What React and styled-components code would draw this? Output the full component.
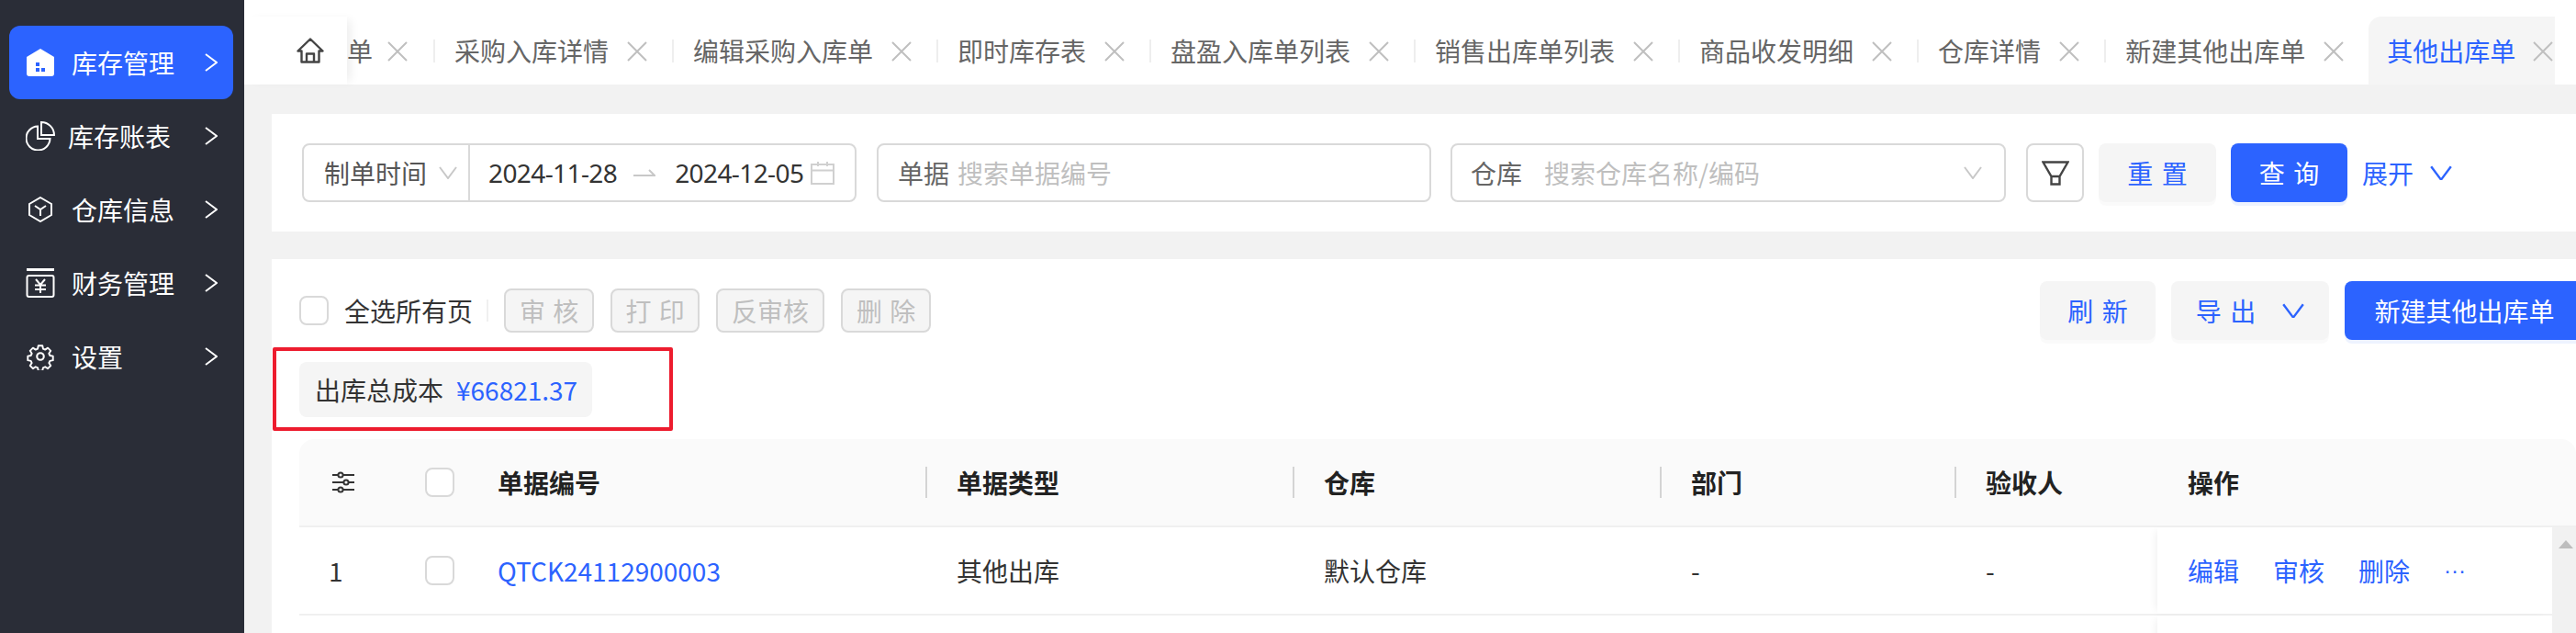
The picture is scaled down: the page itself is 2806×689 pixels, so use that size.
import React from 'react';
import styled, { createGlobalStyle } from 'styled-components';

const BLUE = '#2c63ff';
const GRID = '137px 79px 500px 400px 400px 321px 187px 1fr';

const GlobalStyle = createGlobalStyle`
  html, body { margin: 0; padding: 0; background: #fff; }
  body { font-family: "Noto Sans CJK SC", "Noto Sans", sans-serif; font-size: 28px; color: #333; }
  * { box-sizing: border-box; }
`;

const Page = styled.div`
  display: flex;
  width: 2806px;
  height: 689px;
  overflow: hidden;
`;

/* sidebar */
const Sidebar = styled.aside`
  flex: none;
  width: 266px;
  padding: 28px 12px 0 10px;
  background: #2a2d37;
`;

const MenuItem = styled.div`
  display: flex;
  align-items: center;
  height: 80px;
  padding-right: 17px;
  border-radius: 12px;
  color: #fff;
  background: ${(p) => (p.$active ? BLUE : 'transparent')};
`;

const MenuIcon = styled.span`
  flex: none;
  display: flex;
  justify-content: center;
  width: 68px;
  margin-right: ${(p) => p.$gap}px;
`;

const MenuLabel = styled.span`
  flex: 1;
  line-height: 1;
`;

/* main column */
const Main = styled.main`
  flex: 1;
  min-width: 0;
  background: #f2f2f2;
`;

const TabBar = styled.div`
  display: flex;
  align-items: flex-end;
  height: 92px;
  margin-bottom: 32px;
  padding-right: 23px;
  background: #fff;
`;

const HomeCell = styled.div`
  flex: none;
  display: flex;
  align-items: center;
  height: 74px;
  width: 112px;
  padding: 0 0 0 57px;
  box-shadow: 8px 0 10px -4px rgba(0, 0, 0, 0.07);
  position: relative;
  z-index: 1;
  background: #fff;
`;

const TabScroller = styled.div`
  flex: 1;
  min-width: 0;
  display: flex;
  align-items: center;
  height: 74px;
  overflow: hidden;
`;

const Tab = styled.div`
  flex: none;
  display: flex;
  align-items: center;
  height: 74px;
  padding: 0 ${(p) => (p.$first ? 28 : 27)}px 0 ${(p) => (p.$first ? 0 : p.$active ? 20 : 21)}px;
  gap: ${(p) => (p.$first ? 16 : p.$active ? 19 : 20)}px;
  white-space: nowrap;
  line-height: 1;
  color: ${(p) => (p.$active ? BLUE : '#666')};
  background: ${(p) => (p.$active ? '#f5f5f5' : 'transparent')};
  border-radius: ${(p) => (p.$active ? '14px 0 0 0' : '0')};
  svg { flex: none; margin-top: 2px; }
`;

const TabDivider = styled.span`
  flex: none;
  width: 2px;
  height: 25px;
  background: #eee;
`;

const Card = styled.section`
  position: relative;
  margin-left: 30px;
  background: #fff;
`;

const FilterCard = styled(Card)`
  height: 128px;
  margin-bottom: 30px;
  padding: 32px 0 0 33px;
`;

const FilterRow = styled.div`
  display: flex;
  align-items: center;
`;

const Field = styled.div`
  flex: none;
  display: flex;
  align-items: center;
  width: ${(p) => p.$w}px;
  height: 64px;
  margin-right: ${(p) => p.$mr}px;
  padding-left: ${(p) => p.$pl || 0}px;
  border: 2px solid #d9d9d9;
  border-radius: 8px;
  line-height: 1;
`;

const DateSelect = styled.div`
  flex: none;
  display: flex;
  align-items: center;
  justify-content: space-between;
  width: 181px;
  height: 100%;
  padding: 0 12px 0 22px;
  border-right: 2px solid #d9d9d9;
  color: #555;
`;

const DateValue = styled.span`
  margin: 0 ${(p) => p.$mr}px 0 ${(p) => p.$ml}px;
  color: #333;
  font-family: "Noto Sans", sans-serif;
  font-size: 28px;
  letter-spacing: -0.6px;
  white-space: nowrap;
`;

const FieldLabel = styled.span`
  flex: none;
  color: #666;
  margin-right: ${(p) => p.$mr}px;
`;

const Placeholder = styled.span`
  flex: 1;
  color: #bfbfbf;
`;

const FieldCaret = styled.span`
  display: flex;
  margin-right: 24px;
`;

const IconButton = styled.button`
  flex: none;
  display: flex;
  align-items: center;
  justify-content: center;
  width: 63px;
  height: 64px;
  margin-right: 16px;
  padding: 0;
  background: #fff;
  border: 2px solid #d9d9d9;
  border-radius: 8px;
`;

const Button = styled.button`
  flex: none;
  display: inline-flex;
  align-items: center;
  justify-content: center;
  gap: ${(p) => p.$gap || 0}px;
  width: ${(p) => p.$w}px;
  height: 64px;
  margin-right: ${(p) => p.$mr || 0}px;
  padding: 0;
  border: 0;
  border-radius: 8px;
  font: inherit;
  line-height: 1;
  color: ${(p) => (p.$primary ? '#fff' : BLUE)};
  background: ${(p) => (p.$primary ? BLUE : '#f5f5f5')};
  box-shadow: 0 4px 0 ${(p) => (p.$primary ? 'rgba(44, 99, 255, 0.08)' : 'rgba(0, 0, 0, 0.02)')};
  word-spacing: 3px;
  white-space: nowrap;
`;

const TextLink = styled.span`
  display: inline-flex;
  align-items: center;
  gap: 18px;
  color: ${BLUE};
  line-height: 1;
`;

const TableCard = styled(Card)`
  height: 407px;
  padding: 24px 0 0 30px;
`;

const Toolbar = styled.div`
  display: flex;
  justify-content: space-between;
  align-items: center;
  height: 64px;
`;

const ToolLeft = styled.div`
  display: flex;
  align-items: center;
  line-height: 1;
`;

const ToolRight = styled.div`
  display: flex;
  gap: 17px;
  margin-right: -9px;
`;

const Check = styled.span`
  flex: none;
  display: block;
  width: 32px;
  height: 32px;
  background: #fff;
  border: 2px solid #d9d9d9;
  border-radius: 8px;
`;

const SelectAll = styled.span`
  margin: 0 15px 0 17px;
`;

const ToolDivider = styled.span`
  width: 2px;
  height: 24px;
  margin-right: 17px;
  background: #f0f0f0;
`;

const DisabledButton = styled.button`
  flex: none;
  width: ${(p) => p.$w}px;
  height: 48px;
  margin-right: 18px;
  padding: 0;
  border: 2px solid #d9d9d9;
  border-radius: 8px;
  background: #f5f5f5;
  color: #bfbfbf;
  font: inherit;
  line-height: 1;
  word-spacing: 2px;
  white-space: nowrap;
`;

const CostTag = styled.div`
  display: inline-flex;
  align-items: center;
  gap: 14px;
  height: 60px;
  margin: 24px 0;
  padding: 0 16px 0 17px;
  background: #f5f5f5;
  border-radius: 8px;
  line-height: 1;
  vertical-align: top;
`;

const CostValue = styled.span`
  color: ${BLUE};
`;

/* annotation drawn over the page */
const RedMark = styled.div`
  position: absolute;
  left: 1px;
  top: 96px;
  width: 436px;
  height: 91px;
  border: 4px solid #ed1c2e;
  border-radius: 2px;
  pointer-events: none;
`;

const TableHead = styled.div`
  display: grid;
  grid-template-columns: ${GRID};
  align-items: center;
  height: 96px;
  background: #fafafa;
  border-bottom: 2px solid #f0f0f0;
  border-radius: 16px 16px 0 0;
  font-weight: 700;
  color: #222;
  line-height: 1;
`;

const HeadCell = styled.div`
  display: flex;
  align-items: center;
  justify-content: space-between;
  padding-left: ${(p) => p.$pl || 0}px;
`;

const HeadSep = styled.span`
  width: 2px;
  height: 34px;
  margin-right: 32px;
  background: #d4d4d4;
`;

const TableBody = styled.div`
  display: flex;
  height: 130px;
`;

const Rows = styled.div`
  flex: 1;
  min-width: 0;
`;

const Row = styled.div`
  display: grid;
  grid-template-columns: ${GRID};
  align-items: stretch;
  height: 96px;
  border-bottom: 2px solid #f0f0f0;
  line-height: 1;
  color: #333;
`;

const Cell = styled.div`
  display: flex;
  align-items: center;
  padding-left: ${(p) => p.$pl || 0}px;
  color: ${(p) => p.$color || 'inherit'};
`;

const ActionCell = styled.div`
  display: flex;
  align-items: center;
  gap: 37px;
  padding-left: 33px;
  background: #fff;
  box-shadow: -6px 0 8px -4px rgba(0, 0, 0, 0.06);
  color: ${BLUE};
`;

const MoreDots = styled.span`
  font-family: "Liberation Sans", sans-serif;
  font-size: 24px;
`;

const ScrollTrack = styled.div`
  flex: none;
  display: flex;
  justify-content: center;
  width: 26px;
  padding: 14px 0 0 4px;
  background: #f1f1f1;
`;

const ScrollArrow = styled.span`
  width: 0;
  height: 0;
  border-left: 8px solid transparent;
  border-right: 8px solid transparent;
  border-bottom: 9px solid #bdbdbd;
`;

const Chevron = ({ size = 20, color = '#fff', w = 2, dir = 'right' }) =>
  dir === 'right' ? (
    <svg width={size * 0.7} height={size} viewBox="0 0 14 20" fill="none">
      <path d="M1 1l12 9L1 19" stroke={color} strokeWidth={w} />
    </svg>
  ) : (
    <svg width={size} height={size * 0.7} viewBox="0 0 20 14" fill="none">
      <path d="M1 1l9 12 9-12" stroke={color} strokeWidth={w} />
    </svg>
  );

const Close = ({ color = '#bfbfbf' }) => (
  <svg width="22" height="22" viewBox="0 0 22 22" fill="none">
    <path d="M1 1l20 20M21 1L1 21" stroke={color} strokeWidth="2" />
  </svg>
);

const HouseFilled = () => (
  <svg width="30" height="30" viewBox="0 0 30 30">
    <path d="M15 0L30 9v18a3 3 0 0 1-3 3H3a3 3 0 0 1-3-3V9z" fill="#fff" />
    <path d="M10 15h4v4h-4zM10 21h4v4h-4zM16 21h4v4h-4z" fill={BLUE} />
  </svg>
);

const Pie = () => (
  <svg width="32" height="32" viewBox="0 0 32 32" fill="none" stroke="#fff" strokeWidth="2">
    <path d="M13 5.5a13 13 0 1 0 13.5 13.5H13z" />
    <path d="M17 1v14h14A14 14 0 0 0 17 1z" />
  </svg>
);

const Cube = () => (
  <svg width="26" height="28" viewBox="0 0 26 28" fill="none" stroke="#fff" strokeWidth="2">
    <path d="M13 1l12 7v12l-12 7-12-7V8z" />
    <path d="M7 10l6 4 6-4M13 14v7" />
  </svg>
);

const Finance = () => (
  <svg width="32" height="32" viewBox="0 0 32 32" fill="none" stroke="#fff" strokeWidth="2">
    <path d="M1 1.5h30" strokeWidth="3" />
    <rect x="1.5" y="8" width="29" height="23" rx="2" />
    <path d="M11 12l5 6 5-6M10 18.500h12M10 23h12M16 18v9" />
  </svg>
);

const Gear = () => (
  <svg width="30" height="30" viewBox="0 0 24 24" fill="none" stroke="#fff" strokeWidth="1.7" strokeLinejoin="round">
    <path d="M10 1.500h4l.6 3 2 .9 2.600-1.700 2.800 2.800-1.700 2.600.9 2 3 .6v4l-3 .6-.9 2 1.700 2.600-2.800 2.800-2.600-1.700-2 .9-.6 3h-4l-.6-3-2-.9-2.600 1.700-2.800-2.800 1.700-2.600-.9-2-3-.6v-4l3-.6.9-2L2 6.500l2.800-2.800 2.600 1.700 2-.9z" transform="translate(1.200 1.200) scale(.9)" />
    <circle cx="12" cy="12" r="3" />
  </svg>
);

const HomeOutline = () => (
  <svg width="30" height="28" viewBox="0 0 30 28" fill="none" stroke="#444" strokeWidth="2.400" strokeLinejoin="round">
    <path d="M1.500 14.500L15 1.500l13.500 13H24.500V26.500h-19V14.500zM11 26.500v-9h8v9" />
  </svg>
);

const RangeArrow = () => (
  <svg width="24" height="8" viewBox="0 0 24 8" fill="none" stroke="#c8c8c8" strokeWidth="2">
    <path d="M0 7h23L17 1" />
  </svg>
);

const Calendar = () => (
  <svg width="26" height="25" viewBox="0 0 26 25" fill="none" stroke="#d0d0d0" strokeWidth="2">
    <rect x="1" y="3" width="24" height="21" />
    <path d="M1 9.500h24M8 0v5M18 0v5" />
  </svg>
);

const Funnel = () => (
  <svg width="30" height="27" viewBox="0 0 30 27" fill="none" stroke="#444" strokeWidth="2.400">
    <path d="M1.500 1.500h27L19.500 17h-9zM10.500 17h9v8.500h-9z" />
  </svg>
);

const Sliders = () => (
  <svg width="24" height="24" viewBox="0 0 24 24" fill="none" stroke="#333" strokeWidth="2">
    <path d="M0 4h24M0 12h24M0 20h24" />
    <circle cx="9" cy="4" r="2.600" fill="#fafafa" />
    <circle cx="15" cy="12" r="2.600" fill="#fafafa" />
    <circle cx="9" cy="20" r="2.600" fill="#fafafa" />
  </svg>
);

const menu = [
  { label: '库存管理', icon: <HouseFilled />, gap: 0, active: true },
  { label: '库存账表', icon: <Pie />, gap: -4 },
  { label: '仓库信息', icon: <Cube />, gap: 0 },
  { label: '财务管理', icon: <Finance />, gap: 0 },
  { label: '设置', icon: <Gear />, gap: 0 },
];

const tabs = ['采购入库详情', '编辑采购入库单', '即时库存表', '盘盈入库单列表', '销售出库单列表', '商品收发明细', '仓库详情', '新建其他出库单'];

export default function App() {
  return (
    <Page>
      <GlobalStyle />
      <Sidebar>
        {menu.map((m) => (
          <MenuItem key={m.label} $active={m.active}>
            <MenuIcon $gap={m.gap}>{m.icon}</MenuIcon>
            <MenuLabel>{m.label}</MenuLabel>
            <Chevron />
          </MenuItem>
        ))}
      </Sidebar>

      <Main>
        <TabBar>
          <HomeCell>
            <HomeOutline />
          </HomeCell>
          <TabScroller>
            <Tab $first>
              单<Close />
            </Tab>
            {tabs.map((t) => (
              <React.Fragment key={t}>
                <TabDivider />
                <Tab>
                  {t}
                  <Close />
                </Tab>
              </React.Fragment>
            ))}
            <Tab $active>
              其他出库单
              <Close />
            </Tab>
          </TabScroller>
        </TabBar>

        <FilterCard>
          <FilterRow>
            <Field $w={604} $mr={22}>
              <DateSelect>
                制单时间
                <Chevron size={20} color="#c8c8c8" dir="down" />
              </DateSelect>
              <DateValue $ml={20} $mr={18}>2024-11-28</DateValue>
              <RangeArrow />
              <DateValue $ml={21} $mr={8}>2024-12-05</DateValue>
              <Calendar />
            </Field>
            <Field $w={604} $mr={21} $pl={21}>
              <FieldLabel $mr={9}>单据</FieldLabel>
              <Placeholder>搜索单据编号</Placeholder>
            </Field>
            <Field $w={605} $mr={22} $pl={20}>
              <FieldLabel $mr={24}>仓库</FieldLabel>
              <Placeholder>搜索仓库名称/编码</Placeholder>
              <FieldCaret>
                <Chevron size={20} color="#c8c8c8" dir="down" />
              </FieldCaret>
            </Field>
            <IconButton>
              <Funnel />
            </IconButton>
            <Button $w={128} $mr={16}>重 置</Button>
            <Button $w={127} $mr={16} $primary>查 询</Button>
            <TextLink>
              展开
              <Chevron size={24} color={BLUE} dir="down" />
            </TextLink>
          </FilterRow>
        </FilterCard>

        <TableCard>
          <Toolbar>
            <ToolLeft>
              <Check />
              <SelectAll>全选所有页</SelectAll>
              <ToolDivider />
              <DisabledButton $w={98}>审 核</DisabledButton>
              <DisabledButton $w={97}>打 印</DisabledButton>
              <DisabledButton $w={118}>反审核</DisabledButton>
              <DisabledButton $w={98}>删 除</DisabledButton>
            </ToolLeft>
            <ToolRight>
              <Button $w={126}>刷 新</Button>
              <Button $w={172} $gap={29}>
                导 出
                <Chevron size={24} color={BLUE} dir="down" />
              </Button>
              <Button $w={261} $primary>新建其他出库单</Button>
            </ToolRight>
          </Toolbar>

          <CostTag>
            出库总成本
            <CostValue>¥66821.37</CostValue>
          </CostTag>
          <RedMark />

          <TableHead>
            <HeadCell $pl={36}>
              <Sliders />
            </HeadCell>
            <HeadCell>
              <Check />
            </HeadCell>
            <HeadCell>单据编号<HeadSep /></HeadCell>
            <HeadCell>单据类型<HeadSep /></HeadCell>
            <HeadCell>仓库<HeadSep /></HeadCell>
            <HeadCell>部门<HeadSep /></HeadCell>
            <HeadCell>验收人</HeadCell>
            <HeadCell $pl={33}>操作</HeadCell>
          </TableHead>

          <TableBody>
            <Rows>
              <Row>
                <Cell $pl={32}>1</Cell>
                <Cell><Check /></Cell>
                <Cell $color={BLUE}>QTCK24112900003</Cell>
                <Cell>其他出库</Cell>
                <Cell>默认仓库</Cell>
                <Cell>-</Cell>
                <Cell>-</Cell>
                <ActionCell>
                  <span>编辑</span>
                  <span>审核</span>
                  <span>删除</span>
                  <MoreDots>···</MoreDots>
                </ActionCell>
              </Row>
              <Row>
                <Cell /><Cell /><Cell /><Cell /><Cell /><Cell /><Cell />
                <ActionCell />
              </Row>
            </Rows>
            <ScrollTrack>
              <ScrollArrow />
            </ScrollTrack>
          </TableBody>
        </TableCard>
      </Main>
    </Page>
  );
}
